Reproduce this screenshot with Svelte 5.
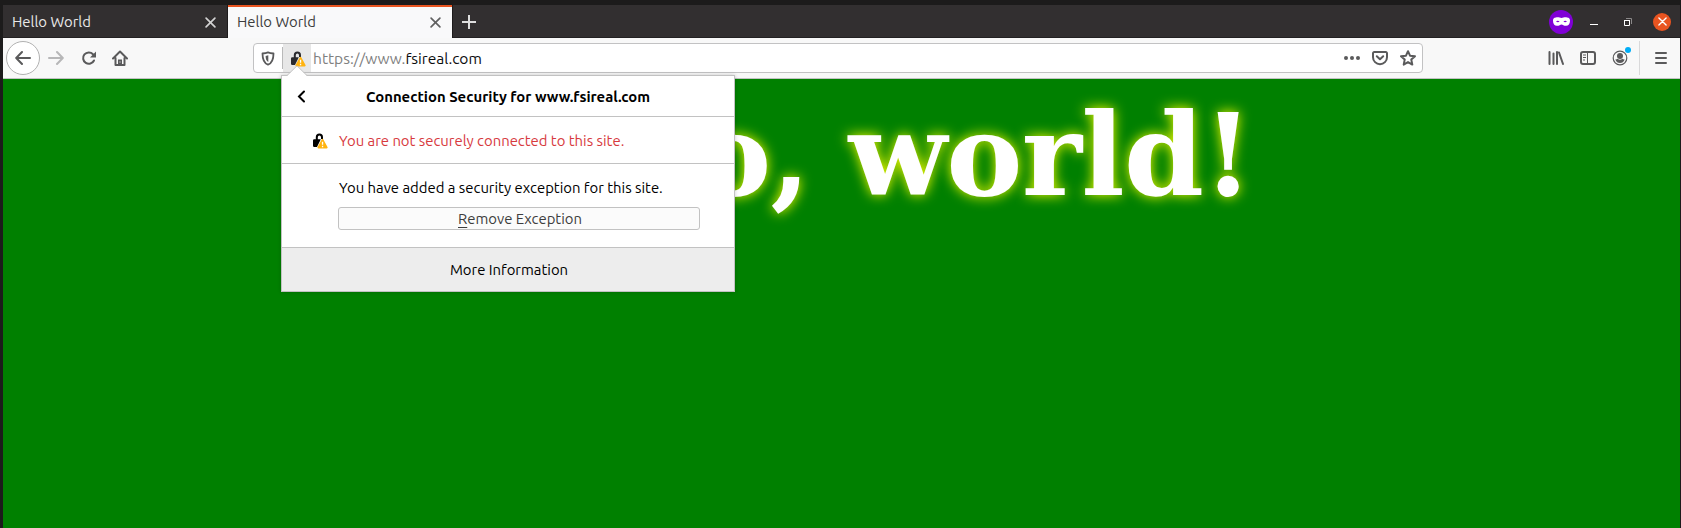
<script>
  const site = 'www.fsireal.com';
</script>

{#snippet lock(color)}
  <svg class="lock" width="16" height="16" viewBox="0 0 16 16">
    <path d="M4.800 8V4.200a2.600 2.600 0 0 1 5.200 0V6" fill="none" stroke={color} stroke-width="2" />
    <path d="M2.200 6.200h6.600L5 14H2.200A1.200 1.200 0 0 1 1 12.800V7.400a1.200 1.200 0 0 1 1.200-1.200z" fill={color} />
    <path d="M9.700 6.400a1 1 0 0 1 1.700 0l4.100 7.600a1 1 0 0 1-.9 1.500H6.500a1 1 0 0 1-.9-1.500z" fill="#ffb310" />
    <path d="M10.550 8.800v3M10.550 12.800v1.400" stroke="#fff" stroke-width="1.300" />
  </svg>
{/snippet}

{#snippet cross(size, width)}
  <svg width={size} height={size} viewBox="0 0 10 10">
    <path d="M1 1l8 8M9 1L1 9" fill="none" stroke="currentColor" stroke-width={width} stroke-linecap="round" />
  </svg>
{/snippet}

<div class="window">
  <header class="tabs">
    <div class="tab"><span>Hello World</span>{@render cross(11, 1.5)}</div>
    <div class="tab active"><span>Hello World</span>{@render cross(11, 1.5)}</div>
    <svg class="plus" width="14" height="14" viewBox="0 0 14 14"><path d="M7 0v14M0 7h14" stroke="currentColor" stroke-width="2" /></svg>
    <div class="controls">
      <span class="mask">
        <svg width="17" height="9" viewBox="0 0 17 9">
          <path fill="#fff" fill-rule="evenodd" d="M3 .4C5.500 0 7 .9 8.500.9S11.500 0 14 .4C16.300.7 17 1.700 17 3.800 17 6.900 15.500 8.800 13 8.800 10.700 8.800 9.800 7.400 8.500 7.400S6.300 8.800 4 8.800C1.500 8.800 0 6.900 0 3.800 0 1.700.7.7 3 .4zM3 4.600Q4.900 5.700 6.600 4.700 4.900 3.100 3 4.600zM14 4.600Q12.100 5.700 10.400 4.700 12.100 3.100 14 4.600z" />
        </svg>
      </span>
      <span class="minimize"></span>
      <svg class="restore" width="8" height="8" viewBox="0 0 8 8"><path d="M2 .5h5.500V6" fill="none" stroke="#8b8989" /><path d="M.5 2.500h5v5h-5z" fill="none" stroke="#fff" /><path d="M0 2.500h6" stroke="#fff" /></svg>
      <span class="close">{@render cross(9, 1.5)}</span>
    </div>
  </header>

  <nav class="toolbar">
    <span class="back">
      <svg width="16" height="16" viewBox="0 0 16 16"><path d="M15 8H1.500M7 2L1.200 8 7 14" class="line" /></svg>
    </span>
    <svg class="forward" width="16" height="16" viewBox="0 0 16 16"><path d="M1 8h13.500M9 2l5.800 6L9 14" class="line" /></svg>
    <svg class="reload" width="16" height="16" viewBox="0 0 16 16"><path d="M13 10.500A5.700 5.700 0 1 1 12 4.200L14 6" class="line" /><path d="M15 1.500V7.500H9z" fill="currentColor" /></svg>
    <svg class="home" width="16" height="16" viewBox="0 0 16 16"><path d="M1 8.500L8 1.500l7 7M3.500 8v7h9V8" class="line" /><path d="M6 15V9.500h4V15z" fill="currentColor" /><path d="M8 11.500v1" stroke="#fff" /></svg>

    <div class="urlbar">
      <span class="shield">
        <svg width="14" height="15" viewBox="0 0 14 15"><path d="M7 1.300C5 2 3 2.300 1.500 2.500 1.500 8.500 2.500 12 7 13.700 11.500 12 12.500 8.500 12.500 2.500 11 2.300 9 2 7 1.300z" class="line thin" /><path d="M7.300 4.200L4.600 4.900C4.700 8 5.200 9.800 7.300 11z" fill="currentColor" /></svg>
      </span>
      <span class="identity">{@render lock('#2a2a2e')}</span>
      <span class="url"><i>https://www.</i>fsireal.com</span>
      <span class="actions">
        <svg width="16" height="16" viewBox="0 0 16 16"><g fill="currentColor"><circle cx="2" cy="8" r="2" /><circle cx="8" cy="8" r="2" /><circle cx="14" cy="8" r="2" /></g></svg>
        <svg width="16" height="16" viewBox="0 0 16 16"><path d="M2.200 2h11.600A1.200 1.200 0 0 1 15 3.200v4a7 7 0 0 1-14 0v-4A1.200 1.200 0 0 1 2.200 2zM4.800 6.300L8 9.300l3.200-3" class="line" /></svg>
        <svg width="16" height="16" viewBox="0 0 16 16"><path d="M8 1.200l2 4.500 5 .5-3.700 3.400 1 5L8 12.100l-4.300 2.500 1-5L1 6.200l5-.5z" class="line" /></svg>
      </span>
    </div>

    <div class="tools">
      <svg width="16" height="16" viewBox="0 0 16 16"><path d="M1.500 2v12M5.500 3.500V14M9 2v12M11 2.500L15 14" class="line" /></svg>
      <svg width="16" height="16" viewBox="0 0 16 16"><rect x="1" y="2" width="14" height="12" rx="2" class="line" /><path d="M7.500 2v12" stroke="currentColor" /><path d="M3 5h3M3 7.500h3M3 10h2" stroke="currentColor" /></svg>
      <span class="account">
        <svg width="16" height="16" viewBox="0 0 16 16"><circle cx="8" cy="8" r="6.800" fill="none" stroke="currentColor" stroke-width="1.200" /><circle cx="8" cy="6" r="3" fill="currentColor" /><path d="M3.300 9.500Q5 9.300 5.600 8.800 8 10.600 10.400 8.800q.6.500 2.300.7Q11.300 13 8 13T3.300 9.500z" fill="currentColor" /></svg>
        <b></b>
      </span>
      <span class="divider"></span>
      <svg class="menu" width="14" height="14" viewBox="0 0 14 14"><path d="M2 2h10M2 7h10M2 12h10" class="line" /></svg>
    </div>
  </nav>

  <main><h1>Hello, world!</h1></main>

  <section class="popup">
    <svg class="arrow" width="20" height="11" viewBox="0 0 20 11"><path d="M0 11L10 1l10 10z" fill="#fff" /><path d="M0 10.500L10 .8l10 9.700" fill="none" stroke="#c5c5c5" /></svg>
    <div class="title">
      <svg width="9" height="13" viewBox="0 0 9 13"><path d="M7 1.500L2 6.500l5 5" fill="none" stroke="#000" stroke-width="2" stroke-linecap="round" /></svg>
      <strong>Connection Security for {site}</strong>
    </div>
    <div class="status">{@render lock('#000')}<span>You are not securely connected to this site.</span></div>
    <div class="exception">
      <span>You have added a security exception for this site.</span>
      <button><u>R</u>emove Exception</button>
    </div>
    <div class="more"><span>More Information</span></div>
  </section>
</div>

<style>
  :global(body) { background: #1c1c1c; }
  .window {
    position: relative; box-sizing: border-box; width: 1681px; height: 528px;
    padding: 5px 1px 0 3px; display: flex; flex-direction: column; overflow: hidden;
    background: #1c1b1b; font: 14.87px/20px Ubuntu, "Noto Sans", sans-serif; color: #000;
  }
  svg { display: block; flex: none; }
  .line { fill: none; stroke: currentColor; stroke-width: 2; stroke-linecap: round; stroke-linejoin: round; }
  .thin { stroke-width: 1.8; }

  .tabs { height: 33px; display: flex; align-items: center; background: #322f30; color: #dedede; box-shadow: inset 0 -1px #232122; flex: none; }
  .tab { box-sizing: border-box; width: 225px; height: 33px; padding: 1px 11px 0 9px; display: flex; align-items: center; justify-content: space-between; color: #e9e9e9; border-right: 1px solid #1d1b1c; box-shadow: inset 0 -1px #232122; }
  .tab svg { color: #d3d3d3; }
  .tab.active { background: #f9f9fa; color: #3d3d3d; box-shadow: inset 0 2px #e95420; }
  .tab.active svg { color: #606060; }
  .plus { margin-left: 9px; }
  .controls { margin-left: auto; display: flex; align-items: center; padding-right: 9px; }
  .mask { width: 24px; height: 24px; border-radius: 50%; background: #8000d7; display: grid; place-items: center; }
  .minimize { width: 8px; height: 1px; background: #fff; margin: 5px 26px 0 17px; }
  .close { width: 18px; height: 18px; margin-left: 21px; border-radius: 50%; background: #e95420; color: #fff; display: grid; place-items: center; }

  .toolbar { box-sizing: border-box; height: 41px; flex: none; padding-left: 3px; display: flex; align-items: center; background: #f8f8f8; border-bottom: 1px solid #c2c2c3; color: #5a5a5b; }
  .back { box-sizing: border-box; width: 34px; height: 34px; border: 1px solid #b1b1b1; border-radius: 50%; background: #fff; display: grid; place-items: center; }
  .forward { margin-left: 8px; color: #b7b7b8; }
  .reload { margin-left: 16.500px; }
  .home { margin-left: 15.500px; }
  .urlbar { box-sizing: border-box; width: 1170px; height: 30px; margin-left: 125px; display: flex; align-items: center; border: 1px solid #c2c2c3; border-radius: 4px; background: #fff; }
  .shield { box-sizing: border-box; width: 29px; height: 22px; padding: 4px 0 0 7px; border-right: 1px solid #b9b9b9; }
  .identity { box-sizing: border-box; width: 28px; height: 28px; padding: 1px 0 0 1px; display: grid; place-items: center; background: #e7e7e7; }
  .url { margin: 2px 0 0 2px; font-size: 15.55px; color: #0c0c0d; }
  .url i { font-style: normal; color: #808080; }
  .actions { display: flex; gap: 12px; margin: 0 6px 0 auto; }
  .tools { display: flex; align-items: center; margin-left: auto; }
  .tools > svg:first-child { margin-right: 16px; }
  .account { position: relative; margin-left: 16px; }
  .account b { position: absolute; left: 13px; top: -3px; width: 6px; height: 6px; border-radius: 50%; background: #00adf6; }
  .divider { width: 1px; height: 34px; margin: 0 14px 0 11px; background: #d9d9da; }
  .menu { margin-right: 12px; }

  main { flex: 1; background: #008000; overflow: hidden; text-align: center; }
  h1 { margin: 19px 0 0; font: bold 114.4px/115px "DejaVu Serif", serif; letter-spacing: -.8px; color: #fff; text-shadow: 0 0 13px #ff0; white-space: nowrap; }

  .popup { position: absolute; left: 281px; top: 75px; box-sizing: border-box; width: 454px; height: 217px; display: flex; flex-direction: column; background: #fff; border: 1px solid #c2c2c2; box-shadow: 0 0 4px rgb(0 0 0 / 20%); white-space: nowrap; }
  .arrow { position: absolute; left: 5px; top: -11px; }
  .title { box-sizing: border-box; height: 41px; display: flex; align-items: center; padding: 1px 24px 0 15px; border-bottom: 1px solid #c2c2c2; }
  .title strong { flex: 1; text-align: center; }
  .status { box-sizing: border-box; height: 47px; display: flex; align-items: center; gap: 11px; padding: 2px 0 0 30px; border-bottom: 1px solid #c2c2c2; color: #d73a3e; }
  .exception { box-sizing: border-box; height: 84px; padding: 14px 34px 16px 56px; display: flex; flex-direction: column; border-bottom: 1px solid #c2c2c2; }
  .exception > span { margin-left: 1px; }
  button { box-sizing: border-box; width: 362px; height: 23px; margin-top: 9px; padding: 0 0 0 2px; border: 1px solid #c2c2c2; border-radius: 3px; background: #fbfbfb; color: #3d3d3d; font: inherit; line-height: 20px; }
  u { text-underline-offset: 3px; text-decoration-thickness: 1px; }
  .more { flex: 1; display: grid; place-items: center; padding-left: 2px; background: #ededed; }
</style>
